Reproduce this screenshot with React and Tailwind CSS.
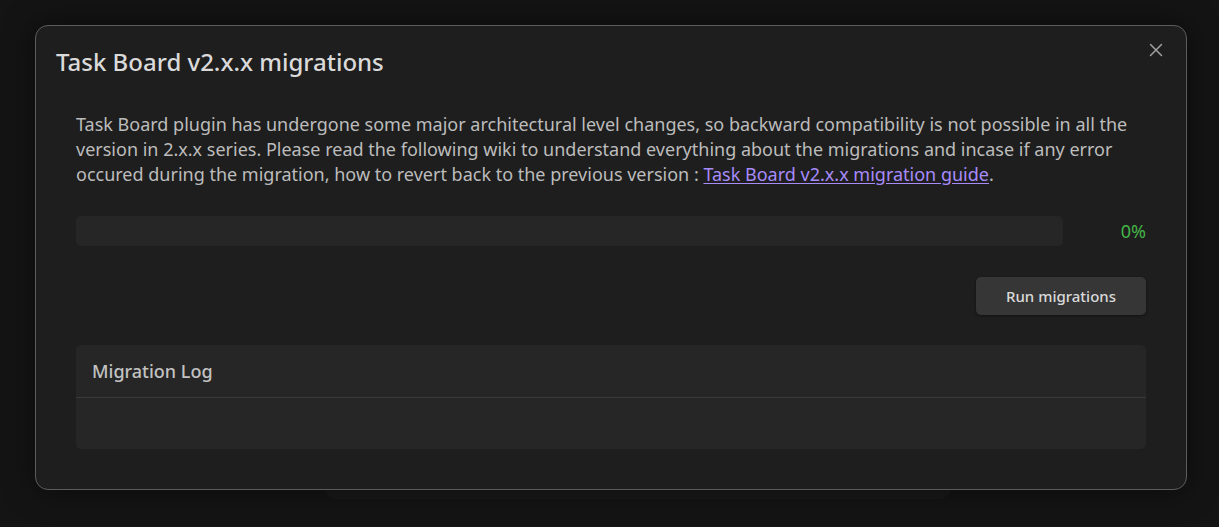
import React from "react";

const FONT = { fontFamily: '"Noto Sans", "Open Sans", sans-serif' };

const CloseIcon = () => (
  <svg width="16" height="16" viewBox="0 0 16 16" fill="none" stroke="currentColor" strokeWidth="1.5" strokeLinecap="round">
    <path d="M2.5 2.5 L13.5 13.5 M13.5 2.5 L2.5 13.5" />
  </svg>
);

const MigrationModal = () => {
  const progress = 0;

  return (
    <div className="relative w-[1152px] h-[465px] ml-[35px] rounded-[13px] border border-[#5c5c5c] bg-[#1e1e1e] shadow-[0_0_30px_rgba(0,0,0,0.5)] px-5 pt-5 pb-5">
      <button className="absolute top-[16px] right-[22px] text-[#a0a0a0]">
        <CloseIcon />
      </button>

      <h2 className="text-[24px] leading-[32px] font-medium text-[#dadada]">
        Task Board v2.x.x migrations
      </h2>

      <div className="px-5 pt-[34px]">
        <p className="text-[18px] leading-[25px] text-[#bcbcbc]">
          Task Board plugin has undergone some major architectural level changes, so backward compatibility is not possible in all the version in 2.x.x series. Please read the following wiki to understand everything about the migrations and incase if any error occured during the migration, how to revert back to the previous version :{" "}
          <a href="#" className="text-[#a78bfa] underline underline-offset-2">
            Task Board v2.x.x migration guide
          </a>
          .
        </p>

        <div className="flex items-center mt-[29px]">
          <div className="flex-1 h-[30px] rounded-[5px] bg-[#262626] overflow-hidden">
            <div className="h-full bg-[#44b548]" style={{ width: `${progress}%` }} />
          </div>
          <span className="w-[83px] text-right text-[18px] text-[#44b548]">{progress}%</span>
        </div>

        <div className="flex justify-end mt-[31px]">
          <button className="h-[38px] w-[170px] rounded-[5px] bg-[#363636] text-[15px] font-medium text-[#dadada] shadow-[0_1px_3px_rgba(0,0,0,0.4)]">
            Run migrations
          </button>
        </div>

        <div className="mt-[30px] h-[104px] rounded-[5px] bg-[#262626]">
          <div className="h-[53px] flex items-center px-4 border-b border-[#3a3a3a] text-[18px] font-medium text-[#c2c2c2]">
            Migration Log
          </div>
          <div className="px-4 py-2 text-[14px] text-[#aaaaaa]" />
        </div>
      </div>
    </div>
  );
};

export default function App() {
  return (
    <div className="relative h-[527px] w-full overflow-hidden bg-[#141414] pt-[25px]" style={FONT}>
      <div className="absolute left-[325px] top-[120px] w-[625px] h-[379px] rounded-[10px] bg-[#191919]" />
      <div className="relative">
        <MigrationModal />
      </div>
    </div>
  );
}
